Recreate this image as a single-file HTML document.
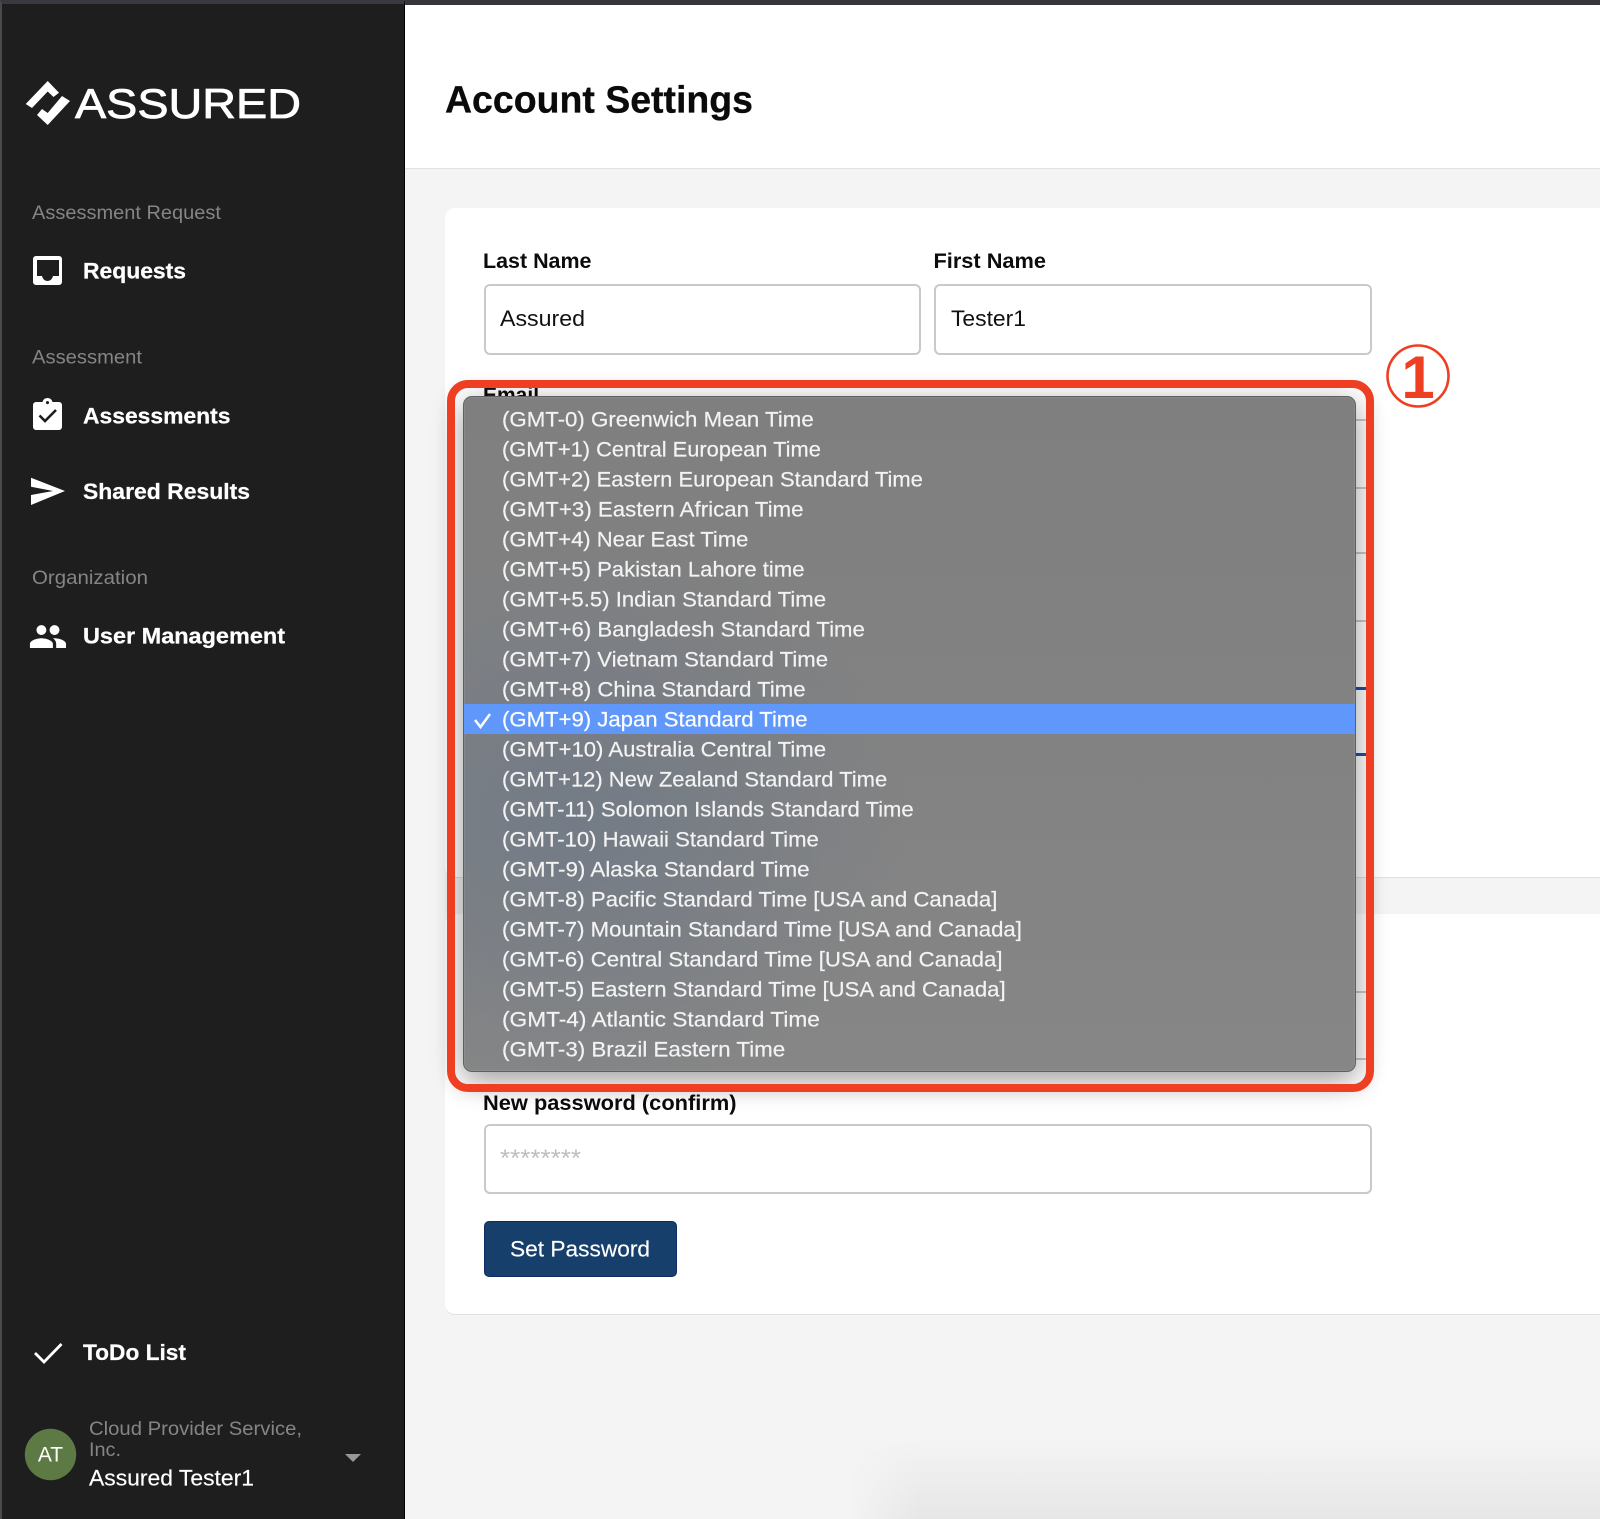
<!DOCTYPE html>
<html lang="en">
<head>
<meta charset="utf-8">
<title>Account Settings</title>
<style>
html,body{margin:0;padding:0;background:#f4f4f4;width:1600px;height:1519px;overflow:hidden;}
body{font-family:"Liberation Sans",sans-serif;}
div{position:absolute;box-sizing:border-box;}
#root{left:0;top:0;width:1600px;height:1519px;overflow:hidden;background:#f4f4f4;}
.inp{background:#fff;border:2px solid #c9c9c9;border-radius:6px;}
svg{position:absolute;left:0;top:0;}
text{font-family:"Liberation Sans",sans-serif;}
.l{font-weight:700;font-size:21px;fill:#0c0c0c;}
.n{font-weight:700;font-size:22.500px;fill:#fff;stroke:#fff;stroke-width:.25px;}
.g{font-size:19.500px;fill:#858585;}
.o{font-size:21px;fill:#f3f3f3;stroke:#f3f3f3;stroke-width:.2px;}
</style>
</head>
<body>
<div id="root">
<div style="left:0;top:0;width:1600px;height:5px;background:#35373c;"></div>
<div style="left:0;top:0;width:405px;height:1519px;background:#1e1e1e;border-left:2px solid #4a4a4a;border-top:4px solid #383a3f;border-right:1px solid #000;"></div>
<div style="left:405px;top:5px;width:1195px;height:164px;background:#fff;border-bottom:1.500px solid #e2e2e2;"></div>

<div style="left:850px;top:1440px;width:750px;height:79px;background:linear-gradient(to bottom,rgba(230,230,230,0),#e6e6e6);-webkit-mask-image:linear-gradient(to right,transparent,#000 70px);mask-image:linear-gradient(to right,transparent,#000 70px);"></div>

<div style="left:445px;top:208px;width:1175px;height:670px;background:#fff;border-radius:10px;border-bottom:1.500px solid #e0e0e0;"></div>
<div style="left:445px;top:914px;width:1175px;height:401px;background:#fff;border-radius:10px;border-bottom:1.500px solid #e0e0e0;"></div>

<div class="inp" style="left:483.500px;top:284px;width:437px;height:71px;"></div>
<div class="inp" style="left:933.500px;top:284px;width:438.500px;height:71px;"></div>
<div class="inp" style="left:483.500px;top:419px;width:888.500px;height:70px;"></div>
<div class="inp" style="left:483.500px;top:552px;width:888.500px;height:70px;"></div>
<div class="inp" style="left:483.500px;top:687px;width:888.500px;height:69px;border:3px solid #1c50a8;"></div>
<div class="inp" style="left:483.500px;top:991px;width:888.500px;height:69px;"></div>
<div class="inp" style="left:483.500px;top:1124px;width:888.500px;height:70px;"></div>
<div style="left:483.500px;top:1221px;width:193.500px;height:56px;background:#173f6b;border:1px solid #0e2b66;border-radius:5px;"></div>

<svg width="1600" height="1519" viewBox="0 0 1600 1519" style="z-index:1;">
  <defs><clipPath id="e"><rect x="470" y="380" width="100" height="16"/></clipPath></defs>
  <polygon fill="#fff" points="25.700,104 47.700,81 59,92.700 53.500,97 47.700,91.500 32,108"/>
  <polygon fill="#fff" points="37,115 47.700,125 70,101 62,96 47.700,113 42,109"/>
  <text x="75" y="118" font-size="42" fill="#fff" stroke="#fff" stroke-width=".8" textLength="226" lengthAdjust="spacingAndGlyphs">ASSURED</text>

  <text class="g" x="32" y="219" textLength="189" lengthAdjust="spacingAndGlyphs">Assessment Request</text>
  <path fill="#fff" fill-rule="evenodd" d="M36 256h23a3 3 0 0 1 3 3v23a3 3 0 0 1-3 3H36a3 3 0 0 1-3-3v-23a3 3 0 0 1 3-3zM37 260v16h5c.8 3.200 3 5 5.500 5s4.700-1.800 5.500-5h6v-16z"/>
  <text class="n" x="83" y="278.500" textLength="103" lengthAdjust="spacingAndGlyphs">Requests</text>

  <text class="g" x="32" y="363.500" textLength="110" lengthAdjust="spacingAndGlyphs">Assessment</text>
  <path fill="#fff" fill-rule="evenodd" d="M36 402h6.500c.6-2.600 2.600-4 5-4s4.400 1.400 5 4H59a3 3 0 0 1 3 3v22a3 3 0 0 1-3 3H36a3 3 0 0 1-3-3v-22a3 3 0 0 1 3-3zM47.500 401a1.600 1.600 0 1 0 .01 0z"/>
  <polyline points="39.500,415.500 45,421 56,410" fill="none" stroke="#1e1e1e" stroke-width="2.600"/>
  <text class="n" x="83" y="423.500" textLength="147.500" lengthAdjust="spacingAndGlyphs">Assessments</text>

  <polygon fill="#fff" points="31,477.700 65,491 31,505 31,495 53,491 31,486.700"/>
  <text class="n" x="83" y="499" textLength="167" lengthAdjust="spacingAndGlyphs">Shared Results</text>

  <text class="g" x="32" y="584" textLength="116" lengthAdjust="spacingAndGlyphs">Organization</text>
  <path fill="#fff" transform="translate(28.300 616.900) scale(1.640)" d="M16 11c1.660 0 2.990-1.340 2.990-3S17.660 5 16 5c-1.660 0-3 1.340-3 3s1.340 3 3 3zm-8 0c1.660 0 2.990-1.340 2.990-3S9.660 5 8 5C6.340 5 5 6.340 5 8s1.340 3 3 3zm0 2c-2.330 0-7 1.170-7 3.500V19h14v-2.500c0-2.330-4.670-3.500-7-3.500zm8 0c-.290 0-.620.020-.970.050 1.160.840 1.970 1.970 1.970 3.450V19h6v-2.500c0-2.330-4.670-3.500-7-3.500z"/>
  <text class="n" x="83" y="643.500" textLength="202" lengthAdjust="spacingAndGlyphs">User Management</text>

  <polyline points="35,1353 44,1362 61.500,1344" fill="none" stroke="#fff" stroke-width="2.800"/>
  <text class="n" x="83" y="1360" textLength="103" lengthAdjust="spacingAndGlyphs">ToDo List</text>

  <circle cx="50.500" cy="1454.500" r="25.700" fill="#5d7a45"/>
  <text x="50.500" y="1461.500" font-size="21" fill="#fff" text-anchor="middle">AT</text>
  <text class="g" x="89" y="1435" textLength="213" lengthAdjust="spacingAndGlyphs">Cloud Provider Service,</text>
  <text class="g" x="89" y="1456" textLength="32" lengthAdjust="spacingAndGlyphs">Inc.</text>
  <text x="89" y="1485.500" font-size="22.500" fill="#fff" stroke="#fff" stroke-width=".15" textLength="165" lengthAdjust="spacingAndGlyphs">Assured Tester1</text>
  <polygon fill="#989898" points="345,1454 361,1454 353,1462"/>

  <text x="445" y="112.500" font-size="38" font-weight="700" fill="#0a0a0a" stroke="#0a0a0a" stroke-width=".3" textLength="308" lengthAdjust="spacingAndGlyphs">Account Settings</text>

  <text class="l" x="483" y="268" textLength="108.500" lengthAdjust="spacingAndGlyphs">Last Name</text>
  <text class="l" x="933.500" y="268" textLength="112.500" lengthAdjust="spacingAndGlyphs">First Name</text>
  <text x="500" y="326" font-size="22.500" fill="#111" textLength="85" lengthAdjust="spacingAndGlyphs">Assured</text>
  <text x="951" y="326" font-size="22.500" fill="#111" textLength="75" lengthAdjust="spacingAndGlyphs">Tester1</text>
  <text class="l" x="483" y="402" clip-path="url(#e)">Email</text>
  <text class="l" x="483" y="1110" textLength="253.500" lengthAdjust="spacingAndGlyphs">New password (confirm)</text>
  <text x="500" y="1166" font-size="24" fill="#bdbdbd" textLength="81" lengthAdjust="spacingAndGlyphs">********</text>
  <text x="510" y="1256.500" font-size="22.500" fill="#fff" stroke="#fff" stroke-width=".15" textLength="140" lengthAdjust="spacingAndGlyphs">Set Password</text>
</svg>

<div style="z-index:2;left:463px;top:396px;width:893px;height:676px;border-radius:9px;border:1px solid #5f5f5f;box-shadow:inset 0 0 0 1px rgba(255,255,255,.08),0 8px 30px rgba(0,0,0,.4);background:radial-gradient(ellipse 340px 280px at 110px 420px,#737b86 0%,rgba(115,123,134,0) 100%),linear-gradient(180deg,#7f7f7f 0%,#828282 50%,#868686 100%);"></div>
<div style="z-index:2;left:464px;top:704px;width:891px;height:30px;background:#5f98fa;"></div>

<svg width="1600" height="1519" viewBox="0 0 1600 1519" style="z-index:3;">
  <polyline points="475,720 480.500,727 490,714" fill="none" stroke="#fff" stroke-width="2.500"/>
  <text class="o" x="502" y="426.500" textLength="311.700" lengthAdjust="spacingAndGlyphs">(GMT-0) Greenwich Mean Time</text>
  <text class="o" x="502" y="456.500" textLength="318.900" lengthAdjust="spacingAndGlyphs">(GMT+1) Central European Time</text>
  <text class="o" x="502" y="486.500" textLength="420.900" lengthAdjust="spacingAndGlyphs">(GMT+2) Eastern European Standard Time</text>
  <text class="o" x="502" y="516.500" textLength="301.500" lengthAdjust="spacingAndGlyphs">(GMT+3) Eastern African Time</text>
  <text class="o" x="502" y="546.500" textLength="246.400" lengthAdjust="spacingAndGlyphs">(GMT+4) Near East Time</text>
  <text class="o" x="502" y="576.500" textLength="302.500" lengthAdjust="spacingAndGlyphs">(GMT+5) Pakistan Lahore time</text>
  <text class="o" x="502" y="606.500" textLength="324" lengthAdjust="spacingAndGlyphs">(GMT+5.5) Indian Standard Time</text>
  <text class="o" x="502" y="636.500" textLength="362.800" lengthAdjust="spacingAndGlyphs">(GMT+6) Bangladesh Standard Time</text>
  <text class="o" x="502" y="666.500" textLength="326" lengthAdjust="spacingAndGlyphs">(GMT+7) Vietnam Standard Time</text>
  <text class="o" x="502" y="696.500" textLength="303.600" lengthAdjust="spacingAndGlyphs">(GMT+8) China Standard Time</text>
  <text class="o" x="502" y="726.500" textLength="305.600" lengthAdjust="spacingAndGlyphs" style="fill:#fff;stroke:#fff;">(GMT+9) Japan Standard Time</text>
  <text class="o" x="502" y="756.500" textLength="324" lengthAdjust="spacingAndGlyphs">(GMT+10) Australia Central Time</text>
  <text class="o" x="502" y="786.500" textLength="385.200" lengthAdjust="spacingAndGlyphs">(GMT+12) New Zealand Standard Time</text>
  <text class="o" x="502" y="816.500" textLength="411.700" lengthAdjust="spacingAndGlyphs">(GMT-11) Solomon Islands Standard Time</text>
  <text class="o" x="502" y="846.500" textLength="316.800" lengthAdjust="spacingAndGlyphs">(GMT-10) Hawaii Standard Time</text>
  <text class="o" x="502" y="876.500" textLength="307.600" lengthAdjust="spacingAndGlyphs">(GMT-9) Alaska Standard Time</text>
  <text class="o" x="502" y="906.500" textLength="495.400" lengthAdjust="spacingAndGlyphs">(GMT-8) Pacific Standard Time [USA and Canada]</text>
  <text class="o" x="502" y="936.500" textLength="519.900" lengthAdjust="spacingAndGlyphs">(GMT-7) Mountain Standard Time [USA and Canada]</text>
  <text class="o" x="502" y="966.500" textLength="500.500" lengthAdjust="spacingAndGlyphs">(GMT-6) Central Standard Time [USA and Canada]</text>
  <text class="o" x="502" y="996.500" textLength="503.600" lengthAdjust="spacingAndGlyphs">(GMT-5) Eastern Standard Time [USA and Canada]</text>
  <text class="o" x="502" y="1026.500" textLength="317.900" lengthAdjust="spacingAndGlyphs">(GMT-4) Atlantic Standard Time</text>
  <text class="o" x="502" y="1056.500" textLength="283.200" lengthAdjust="spacingAndGlyphs">(GMT-3) Brazil Eastern Time</text>

  <circle cx="1418" cy="376" r="30.500" fill="none" stroke="#ee3f22" stroke-width="2.600"/>
  <text x="1418" y="398" font-size="60" font-weight="700" fill="#ee3f22" text-anchor="middle">1</text>
</svg>

<div style="z-index:4;left:447px;top:379.500px;width:927px;height:712.500px;border:8px solid #ee3f22;border-radius:21px;box-shadow:0 2px 14px rgba(0,0,0,.05);"></div>
</div>
</body>
</html>
